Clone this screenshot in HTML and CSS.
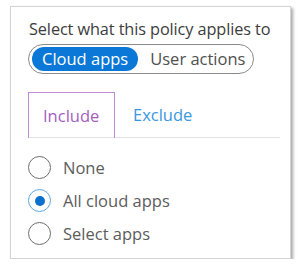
FILE: index.html
```html
<!DOCTYPE html>
<html lang="en">
<head>
    <meta charset="UTF-8">
    <title>Cloud apps</title>
    <link rel="stylesheet" href="styles.css">
</head>
<body>
    <div class="card">
        <div class="title">Select what this policy applies to</div>
        <div class="toggle">
            <span class="toggle-item active">Cloud apps</span>
            <span class="toggle-item">User actions</span>
        </div>
        <div class="tabs">
            <div class="tab selected">Include</div>
            <div class="tab">Exclude</div>
        </div>
        <div class="options">
            <label class="option"><span class="radio"></span>None</label>
            <label class="option"><span class="radio checked"></span>All cloud apps</label>
            <label class="option"><span class="radio"></span>Select apps</label>
        </div>
    </div>
</body>
</html>
```

FILE: styles.css
```css
body {
    margin: 0;
    background: #fff;
    font-family: 'Open Sans', 'Noto Sans', sans-serif;
    font-size: 16.5px;
    color: #505050;
}

.card {
    margin: 6px 0 0 10px;
    width: 281px;
    height: 253px;
    box-sizing: border-box;
    border: 1px solid #d4d4d4;
    box-shadow: 2px 2px 3px rgba(0, 0, 0, 0.35);
    padding: 11px 0 0 18px;
}

.title {
    color: #3c3c3c;
    font-size: 16.3px;
    font-weight: 500;
    line-height: 22px;
    letter-spacing: -0.1px;
}

.toggle {
    margin-top: 4px;
    margin-left: -1px;
    width: 226px;
    height: 30px;
    box-sizing: border-box;
    border: 1px solid #8a8a8a;
    border-radius: 15px;
    display: flex;
    align-items: center;
    padding: 0 3px;
}

.toggle-item {
    line-height: 24px;
    padding: 0 10px;
    border-radius: 12px;
    color: #505050;
    white-space: nowrap;
}

.toggle-item.active {
    background: #0b78d7;
    color: #fff;
    margin-right: 2px;
}

.tabs {
    margin-top: 18px;
    margin-left: -1px;
    width: 252px;
    display: flex;
    border-bottom: 1px solid #e3e3e3;
}

.tab {
    height: 45px;
    line-height: 45px;
    padding: 0 18px;
    color: #3a97e0;
    box-sizing: border-box;
}

.tab.selected {
    width: 87px;
    padding: 0 14px;
    color: #a35ec0;
    border: 1px solid #c589d9;
    border-bottom: none;
    margin-bottom: -1px;
    height: 46px;
}

.options {
    margin-top: 13px;
    margin-left: -1px;
}

.option {
    display: flex;
    align-items: center;
    height: 33px;
    gap: 12px;
    color: #5c5c5c;
}

.radio {
    width: 23px;
    height: 23px;
    box-sizing: border-box;
    border: 1.5px solid #6e6e6e;
    border-radius: 50%;
    display: flex;
    align-items: center;
    justify-content: center;
}

.radio.checked {
    border-color: #5fa8e6;
}

.radio.checked::after {
    content: '';
    width: 10px;
    height: 10px;
    border-radius: 50%;
    background: #0b6fce;
}
```
